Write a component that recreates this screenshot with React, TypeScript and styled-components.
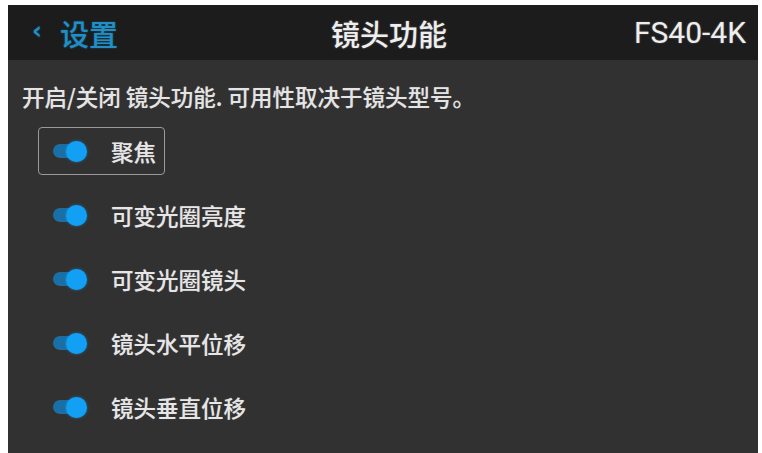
import * as React from 'react';
import styled, { createGlobalStyle } from 'styled-components';

const GlobalStyle = createGlobalStyle`
  html, body {
    margin: 0;
    padding: 0;
    background: #ffffff;
  }
  body {
    font-family: "Noto Sans CJK SC", Roboto, "Noto Sans", sans-serif;
  }
`;

const Screen = styled.div`
  margin: 5px 0 0 8px;
  width: 750px;
  height: 448px;
  background: #313131;
  display: flex;
  flex-direction: column;
  overflow: hidden;
`;

const TopBar = styled.div`
  height: 55px;
  background: #1c1c1c;
  display: grid;
  grid-template-columns: 1fr auto 1fr;
  align-items: center;
  padding: 0 12px 0 24px;
`;

const BackLink = styled.div`
  display: flex;
  align-items: center;
  gap: 18px;
  color: #1f8fc6;
  font-size: 29px;
  font-weight: 500;
  text-shadow: 0 0 2px rgba(31, 143, 198, 0.5);
`;

const Chevron = styled.span`
  font-size: 24px;
  font-family: "DejaVu Sans", sans-serif;
  font-weight: 700;
  transform: translateY(-2px);
`;

const Title = styled.div`
  color: #eeeeee;
  font-size: 29px;
  font-weight: 500;
  text-shadow: 0 0 2px rgba(255, 255, 255, 0.3);
`;

const Model = styled.div`
  justify-self: end;
  color: #eeeeee;
  font-family: Roboto, "Noto Sans", sans-serif;
  font-size: 30px;
  text-shadow: 0 0 2px rgba(255, 255, 255, 0.3);
`;

const Content = styled.div`
  padding: 24px 0 0 14px;
  display: flex;
  flex-direction: column;
`;

const Hint = styled.div`
  color: #e4e4e4;
  font-size: 22.5px;
  font-weight: 500;
  line-height: 24px;
  margin-bottom: 19px;
  text-shadow: 0 0 1px rgba(255, 255, 255, 0.3);
`;

const List = styled.div`
  display: flex;
  flex-direction: column;
  gap: 16px;
`;

const Row = styled.div<{ $focused?: boolean }>`
  display: flex;
  align-items: center;
  gap: 25px;
  height: 48px;
  box-sizing: border-box;
  align-self: flex-start;
  margin-left: 16px;
  padding: 0 8px 0 14px;
  border: 1px solid ${(p) => (p.$focused ? '#9a9a9a' : 'transparent')};
  border-radius: 4px;
`;

const Toggle = styled.div<{ $on: boolean }>`
  position: relative;
  width: 33px;
  height: 14px;
  border-radius: 7px;
  background: ${(p) => (p.$on ? '#1a6fa4' : '#666')};
  filter: blur(0.6px);

  &::after {
    content: '';
    position: absolute;
    top: 50%;
    left: ${(p) => (p.$on ? '13px' : '-2px')};
    width: 21px;
    height: 21px;
    margin-top: -10.5px;
    border-radius: 50%;
    background: #12a0f4;
    box-shadow: 0 0 3px rgba(18, 160, 244, 0.6);
  }
`;

const Label = styled.span`
  color: #e6e6e6;
  font-size: 22.5px;
  font-weight: 500;
  text-shadow: 0 0 1px rgba(255, 255, 255, 0.3);
`;

const items = [
  { label: '聚焦', on: true },
  { label: '可变光圈亮度', on: true },
  { label: '可变光圈镜头', on: true },
  { label: '镜头水平位移', on: true },
  { label: '镜头垂直位移', on: true },
];

const App = () => {
  const [focus] = React.useState(0);
  return (
    <>
      <GlobalStyle />
      <Screen>
        <TopBar>
          <BackLink>
            <Chevron>‹</Chevron>
            <span>设置</span>
          </BackLink>
          <Title>镜头功能</Title>
          <Model>FS40-4K</Model>
        </TopBar>
        <Content>
          <Hint>开启/关闭 镜头功能. 可用性取决于镜头型号。</Hint>
          <List>
            {items.map((it, i) => (
              <Row key={it.label} $focused={i === focus}>
                <Toggle $on={it.on} />
                <Label>{it.label}</Label>
              </Row>
            ))}
          </List>
        </Content>
      </Screen>
    </>
  );
};

export default App;
